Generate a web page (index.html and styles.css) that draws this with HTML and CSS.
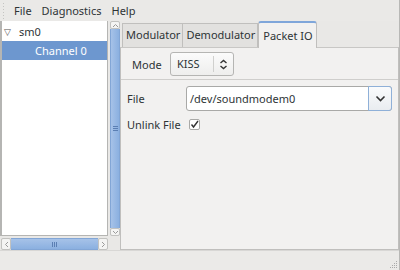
FILE: index.html
```html
<!DOCTYPE html>
<html lang="en">
  <head>
    <meta charset="UTF-8" />
    <title>soundmodem</title>
    <link rel="stylesheet" href="styles.css">
  </head>
  <body>
    <div class="window">
      <div class="menubar">
        <div class="grip"></div>
        <span class="menu">File</span>
        <span class="menu">Diagnostics</span>
        <span class="menu">Help</span>
      </div>

      <div class="main">
        <!-- arbre des canaux -->
        <div class="left">
          <div class="tree-area">
            <div class="tree">
              <div class="row"><span class="expander">&#9661;</span>sm0</div>
              <div class="row selected">Channel 0</div>
            </div>
            <div class="vscroll">
              <div class="arrow">
                <svg width="7" height="5" viewBox="0 0 7 5"><path d="M1 4 L3.5 1.5 L6 4" fill="none" stroke="#9a9a9a" stroke-width="1"/></svg>
              </div>
              <div class="vthumb"><span class="lines-h"></span></div>
              <div class="arrow">
                <svg width="7" height="5" viewBox="0 0 7 5"><path d="M1 1 L3.5 3.5 L6 1" fill="none" stroke="#9a9a9a" stroke-width="1"/></svg>
              </div>
            </div>
          </div>
          <div class="hscroll">
            <div class="harrow">
              <svg width="5" height="7" viewBox="0 0 5 7"><path d="M4 1 L1.5 3.5 L4 6" fill="none" stroke="#9a9a9a" stroke-width="1"/></svg>
            </div>
            <div class="hthumb"><span class="lines-v"></span></div>
            <div class="harrow">
              <svg width="5" height="7" viewBox="0 0 5 7"><path d="M1 1 L3.5 3.5 L1 6" fill="none" stroke="#9a9a9a" stroke-width="1"/></svg>
            </div>
          </div>
        </div>

        <!-- onglets -->
        <div class="right">
          <div class="tabs">
            <div class="tab">Modulator</div>
            <div class="tab">Demodulator</div>
            <div class="tab active">Packet IO</div>
          </div>
          <div class="panel">
            <div class="mode-row">
              <span class="label">Mode</span>
              <div class="combo">
                <span class="combo-text">KISS</span>
                <span class="combo-btn">
                  <svg width="9" height="11" viewBox="0 0 9 11"><path d="M1.5 4 L4.5 1.5 L7.5 4 M1.5 7 L4.5 9.5 L7.5 7" fill="none" stroke="#333" stroke-width="1.4"/></svg>
                </span>
              </div>
            </div>
            <div class="separator"></div>
            <div class="form">
              <span class="label">File</span>
              <div class="entry">
                <span class="entry-text">/dev/soundmodem0</span>
                <span class="entry-btn">
                  <svg width="11" height="7" viewBox="0 0 11 7"><path d="M1.5 1.5 L5.5 5.5 L9.5 1.5" fill="none" stroke="#333" stroke-width="1.6"/></svg>
                </span>
              </div>
              <span class="label">Unlink File</span>
              <div class="check">
                <svg width="9" height="9" viewBox="0 0 9 9"><path d="M1.5 4.5 L3.5 7 L8 1" fill="none" stroke="#333" stroke-width="1.4"/></svg>
              </div>
            </div>
          </div>
        </div>
      </div>

      <div class="statusbar">
        <svg class="resize" width="9" height="9" viewBox="0 0 9 9">
          <rect x="7" y="1" width="1" height="1" fill="#aaa"/>
          <rect x="5" y="3" width="1" height="1" fill="#aaa"/>
          <rect x="7" y="3" width="1" height="1" fill="#aaa"/>
          <rect x="3" y="5" width="1" height="1" fill="#aaa"/>
          <rect x="5" y="5" width="1" height="1" fill="#aaa"/>
          <rect x="7" y="5" width="1" height="1" fill="#aaa"/>
          <rect x="1" y="7" width="1" height="1" fill="#aaa"/>
          <rect x="3" y="7" width="1" height="1" fill="#aaa"/>
          <rect x="5" y="7" width="1" height="1" fill="#aaa"/>
          <rect x="7" y="7" width="1" height="1" fill="#aaa"/>
        </svg>
      </div>
    </div>
  </body>
</html>
```

FILE: styles.css
```css
* {
  margin: 0;
  padding: 0;
  box-sizing: border-box;
}

body {
  font-family: "Noto Sans", "DejaVu Sans", sans-serif;
  font-size: 11px;
  color: #2e3436;
  background-color: #e9e8e6;
}

.window {
  width: 400px;
  height: 270px;
  display: flex;
  flex-direction: column;
  border-right: 1px solid #b8b8b6;
}

/* barre de menus */
.menubar {
  height: 21px;
  display: flex;
  align-items: center;
  background-color: #eae9e7;
}

.grip {
  width: 3px;
  height: 17px;
  margin-left: 2px;
  margin-right: 4px;
  background-image: radial-gradient(#c4c4c2 40%, transparent 45%);
  background-size: 3px 3px;
}

.menu {
  padding: 0 5px;
}

.main {
  height: 229px;
  display: flex;
}

/* panneau de gauche */
.left {
  width: 120px;
  display: flex;
  flex-direction: column;
}

.tree-area {
  height: 215px;
  display: flex;
}

.tree {
  width: 108px;
  background-color: #fff;
  border: 1px solid #b5b5b3;
  border-left-width: 2px;
  border-top: none;
}

.row {
  height: 20px;
  line-height: 21px;
  padding-left: 17px;
  position: relative;
}

.row .expander {
  position: absolute;
  left: 2px;
  top: 0;
  font-size: 9px;
  color: #555;
}

.row.selected {
  height: 19px;
  line-height: 19px;
  background-color: #6d97cf;
  color: #fff;
  padding-left: 33px;
}

.vscroll {
  width: 10px;
  margin-left: 2px;
  display: flex;
  flex-direction: column;
  background-color: #dcdcda;
  border-radius: 2px;
}

.arrow {
  height: 8px;
  display: flex;
  align-items: center;
  justify-content: center;
  background-color: #f4f4f3;
  border: 1px solid #c2c2c0;
  border-radius: 2px;
}

.vthumb {
  flex: 1;
  background: linear-gradient(to right, #a6c2e8, #8bb0e0);
  border-left: 1px solid #82a6d6;
  border-right: 1px solid #82a6d6;
  display: flex;
  align-items: center;
  justify-content: center;
}

.lines-h {
  width: 5px;
  height: 5px;
  border-top: 1px solid #5b7fb3;
  border-bottom: 1px solid #5b7fb3;
  background: linear-gradient(#5b7fb3, #5b7fb3) center / 5px 1px no-repeat;
}

.hscroll {
  height: 12px;
  margin-top: 2px;
  width: 107px;
  margin-left: 1px;
  display: flex;
  background-color: #dcdcda;
  border-radius: 2px;
}

.harrow {
  width: 10px;
  display: flex;
  align-items: center;
  justify-content: center;
  background-color: #f4f4f3;
  border: 1px solid #c2c2c0;
  border-radius: 2px;
}

.hthumb {
  flex: 1;
  background: linear-gradient(#a6c2e8, #8bb0e0);
  border-top: 1px solid #82a6d6;
  border-bottom: 1px solid #82a6d6;
  display: flex;
  align-items: center;
  justify-content: center;
}

.lines-v {
  width: 5px;
  height: 5px;
  border-left: 1px solid #5b7fb3;
  border-right: 1px solid #5b7fb3;
  background: linear-gradient(#5b7fb3, #5b7fb3) center / 1px 5px no-repeat;
}

/* onglets */
.right {
  flex: 1;
  display: flex;
  flex-direction: column;
}

.tabs {
  height: 26px;
  display: flex;
  align-items: flex-end;
  padding-left: 2px;
}

.tab {
  height: 24px;
  line-height: 22px;
  padding: 0 2px 0 3px;
  background-color: #e2e1df;
  border: 1px solid #c0bfbd;
  border-bottom: none;
  border-left: none;
}

.tab:first-child {
  border-left: 1px solid #c0bfbd;
}

.tab.active {
  height: 27px;
  line-height: 25px;
  background-color: #f2f1f0;
  border-top: 2px solid #7fa6da;
  border-left: 1px solid #c0bfbd;
  border-radius: 3px 3px 0 0;
  margin-bottom: -1px;
  padding: 0 3px 0 4px;
  position: relative;
}

.panel {
  flex: 1;
  background-color: #f2f1f0;
  border: 1px solid #c0bfbd;
  border-top-color: #c8c7c5;
}

.mode-row {
  height: 30px;
  display: flex;
  align-items: center;
  padding-left: 11px;
  margin-top: 1px;
}

.mode-row .label {
  width: 38px;
}

.combo {
  width: 64px;
  height: 24px;
  display: flex;
  border: 1px solid #b5b5b3;
  border-radius: 3px;
  background: linear-gradient(#fbfbfb, #eeeeed);
}

.combo-text {
  flex: 1;
  line-height: 22px;
  padding-left: 6px;
}

.combo-btn {
  width: 20px;
  display: flex;
  align-items: center;
  justify-content: center;
  border-left: 1px solid #d0d0ce;
  margin: 3px 0;
}

.separator {
  height: 1px;
  background-color: #cfcecc;
}

.form {
  display: grid;
  grid-template-columns: 59px 206px;
  grid-auto-rows: min-content;
  align-items: center;
  row-gap: 6px;
  padding: 6px 0 0 6px;
}

.entry {
  height: 25px;
  display: flex;
  border: 1px solid #a9a9a7;
  border-radius: 3px;
  background-color: #fff;
}

.entry-text {
  flex: 1;
  line-height: 23px;
  padding-left: 3px;
}

.entry-btn {
  width: 24px;
  margin: -1px -1px -1px 0;
  display: flex;
  align-items: center;
  justify-content: center;
  border: 1px solid #8fb0d8;
  border-radius: 0 3px 3px 0;
  background: linear-gradient(#fafbfc, #e9ecf0);
}

.check {
  width: 11px;
  height: 11px;
  margin-left: 3px;
  display: flex;
  align-items: center;
  justify-content: center;
  border: 1px solid #a9a9a7;
  border-radius: 2px;
  background-color: #fff;
}

/* barre d'état */
.statusbar {
  height: 20px;
  display: flex;
  justify-content: flex-end;
  align-items: flex-end;
  background-color: #ebeae8;
  border-top: 1px solid #d8d7d5;
}

.resize {
  margin: 0 1px 1px 0;
}
```
